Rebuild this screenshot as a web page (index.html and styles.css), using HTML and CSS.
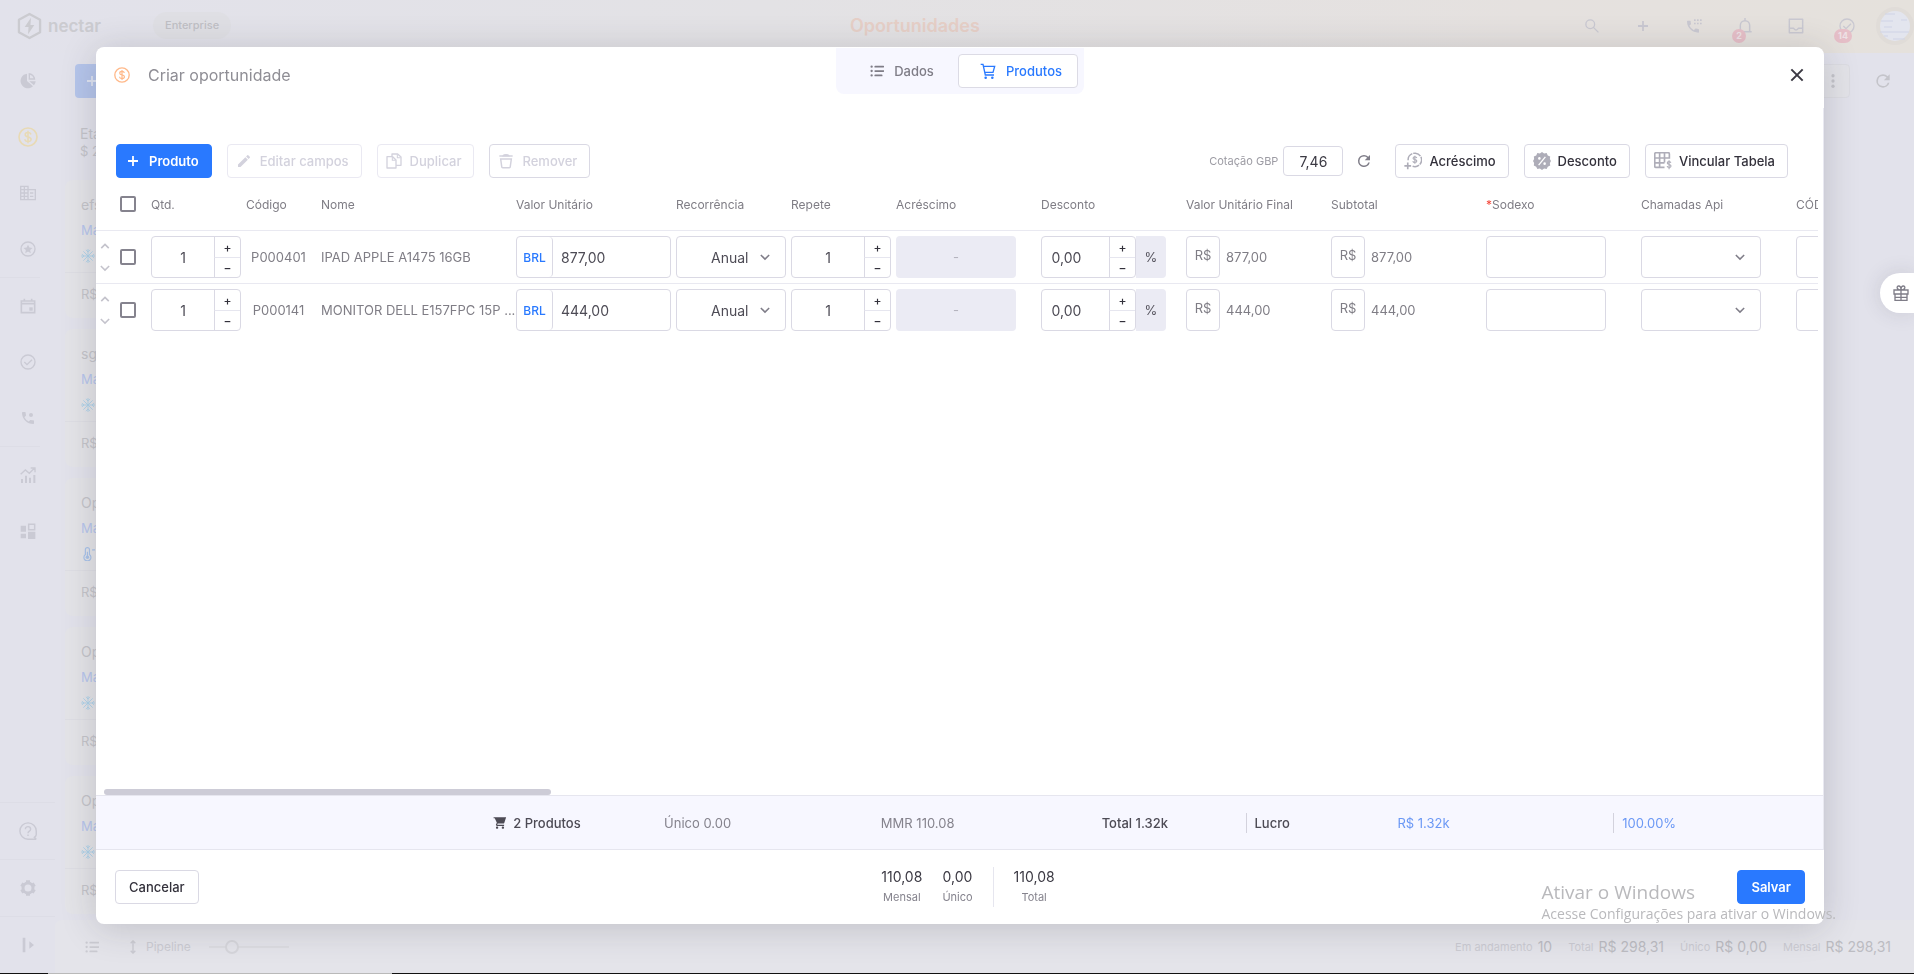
FILE: index.html
```html
<!DOCTYPE html>
<html lang="pt-BR">
<head>
    <meta charset="UTF-8">
    <meta name="viewport" content="width=device-width, initial-scale=1.0">
    <title>Oportunidades</title>
    <link rel="stylesheet" href="styles.css">
</head>
<body>
    <svg class="sprite" aria-hidden="true">
        <symbol id="i-plus" viewBox="0 0 24 24"><path d="M12 2v20M2 12h20" fill="none" stroke="currentColor" stroke-width="3.6"/></symbol>
        <symbol id="i-money" viewBox="0 0 24 24"><circle cx="12" cy="12" r="10.8" fill="none" stroke="currentColor" stroke-width="2"/><path d="M15.5 9c-.3-1.5-1.600-2.300-3.500-2.300-2 0-3.400 1-3.400 2.500 0 3.600 7.100 1.800 7.100 5.500 0 1.600-1.500 2.700-3.700 2.700-2.100 0-3.600-1-3.800-2.700M12 4.500v15" fill="none" stroke="currentColor" stroke-width="1.800"/></symbol>
        <symbol id="i-list" viewBox="0 0 24 24"><path d="M9 4.500h14M9 12h14M9 19.500h11" stroke="currentColor" stroke-width="3" stroke-linecap="round"/><circle cx="2.800" cy="4.500" r="2" fill="currentColor"/><circle cx="2.800" cy="12" r="2" fill="currentColor"/><circle cx="2.800" cy="19.500" r="2" fill="currentColor"/></symbol>
        <symbol id="i-cart" viewBox="0 0 24 24"><path d="M1 2h3.500l3.500 16h13M5.500 5h16.500l-2.500 9H7.500" fill="none" stroke="currentColor" stroke-width="2"/><circle cx="8.500" cy="22" r="1.900" fill="currentColor"/><circle cx="18.500" cy="22" r="1.900" fill="currentColor"/></symbol>
        <symbol id="i-cart-full" viewBox="0 0 24 24"><path d="M7 18c-1.100 0-1.990.9-1.990 2S5.900 22 7 22s2-.9 2-2-.9-2-2-2zM1 2v2h2l3.600 7.590-1.350 2.450c-.16.28-.25.61-.25.960 0 1.100.9 2 2 2h12v-2H7.420c-.14 0-.25-.11-.25-.25l.03-.12.9-1.630h9.450c.75 0 1.410-.41 1.750-1.030L22.500 2H5zm16 16c-1.100 0-1.990.9-1.990 2s.89 2 1.990 2 2-.9 2-2-.9-2-2-2z" fill="currentColor"/></symbol>
        <symbol id="i-close" viewBox="0 0 24 24"><path d="M3.500 3.500l17 17M20.500 3.500l-17 17" stroke="currentColor" stroke-width="3"/></symbol>
        <symbol id="i-pencil" viewBox="0 0 24 24"><path d="M3 17.250V21h3.750L17.810 9.940l-3.750-3.750L3 17.250zM20.710 7.040a1 1 0 0 0 0-1.410l-2.340-2.340a1 1 0 0 0-1.410 0l-1.830 1.830 3.750 3.750 1.830-1.830z" fill="currentColor"/></symbol>
        <symbol id="i-copy" viewBox="0 0 24 24"><path d="M9 5V1.500h8.500L22.500 6v12.500H16M9 5.500H1.500v17H15v-12l-5-5z" fill="none" stroke="currentColor" stroke-width="2" stroke-linejoin="round"/><path d="M17 2v5h5M9.500 6v5h5" fill="none" stroke="currentColor" stroke-width="1.600"/></symbol>
        <symbol id="i-trash" viewBox="0 0 24 24"><path d="M2 4.500h20" stroke="currentColor" stroke-width="2.200"/><path d="M8 4c1-2 7-2 8 0zM4 9h16l-1.600 11.500a1.500 1.500 0 0 1-1.500 1.500H7.100a1.500 1.500 0 0 1-1.500-1.500z" fill="none" stroke="currentColor" stroke-width="2.200"/></symbol>
        <symbol id="i-refresh" viewBox="0 0 24 24"><path d="M17.650 6.350A7.950 7.950 0 0 0 12 4a8 8 0 1 0 7.730 10h-2.080A6 6 0 1 1 12 6c1.660 0 3.140.69 4.220 1.780L13 11h7V4l-2.350 2.350z" fill="currentColor"/></symbol>
        <symbol id="i-add-money" viewBox="0 0 24 24"><path d="M5.500 11a9 9 0 1 1 6 8" fill="none" stroke="currentColor" stroke-width="2" stroke-dasharray="11 1.200"/><path d="M17 8c-.3-1-1.200-1.600-2.500-1.600-1.500 0-2.400.7-2.400 1.800 0 2.500 5 1.300 5 3.900 0 1.200-1 1.900-2.600 1.900-1.500 0-2.500-.7-2.700-1.900M14.500 4.900v10.600" fill="none" stroke="currentColor" stroke-width="1.500"/><path d="M5 14v9M.5 18.500h9" stroke="currentColor" stroke-width="2.200"/></symbol>
        <symbol id="i-percent" viewBox="0 0 24 24"><path d="M12 0l2.800 2 3.400-.6 1.500 3.100 3.200 1.400-.4 3.500L24 12l-1.500 2.600.4 3.500-3.200 1.400-1.500 3.100-3.400-.6L12 24l-2.800-2-3.400.6-1.500-3.100-3.200-1.400.4-3.500L0 12l1.500-2.600-.4-3.500 3.200-1.400 1.500-3.100 3.400.6z" fill="currentColor"/><path d="M16.500 6.500l-9 11" stroke="#fff" stroke-width="1.800"/><circle cx="8.500" cy="8.500" r="1.700" fill="#fff"/><circle cx="15.500" cy="15.500" r="1.700" fill="#fff"/></symbol>
        <symbol id="i-table" viewBox="0 0 24 24"><path d="M14 20.500H2.500a1.500 1.500 0 0 1-1.500-1.500V2.500A1.500 1.500 0 0 1 2.500 1H19a1.500 1.500 0 0 1 1.500 1.500V8H1M1 14.500h13M7.500 1v19.500M14 1v13" fill="none" stroke="currentColor" stroke-width="2.200"/><path d="M22.500 14.300c-.3-1-1.200-1.500-2.400-1.500-1.500 0-2.400.7-2.400 1.900 0 2.600 5 1.300 5 3.900 0 1.200-1 2-2.500 2s-2.500-.7-2.700-1.900M20.100 11v12" fill="none" stroke="currentColor" stroke-width="1.500"/></symbol>
        <symbol id="i-up" viewBox="0 0 24 24"><path d="M3 17l9-9 9 9" fill="none" stroke="currentColor" stroke-width="4"/></symbol>
        <symbol id="i-down" viewBox="0 0 24 24"><path d="M2 7l10 10L22 7" fill="none" stroke="currentColor" stroke-width="3.600"/></symbol>
        <symbol id="i-pie" viewBox="0 0 24 24"><path d="M10.500 1a11 11 0 1 0 9 18.800L10.500 12zM13 0v10h10A10.500 10.500 0 0 0 13 0zm2 2.500A8 8 0 0 1 20.500 8H15zM14 12.500h9.500a10 10 0 0 1-2.500 6z" fill="currentColor" fill-rule="evenodd"/></symbol>
        <symbol id="i-building" viewBox="0 0 24 24"><path d="M1 2h11v20H1zM12 7h11v15H12M1 7h11M1 12h11M1 17h11M6.500 2v20M15 12h5M15 17h5" fill="none" stroke="currentColor" stroke-width="2"/></symbol>
        <symbol id="i-star" viewBox="0 0 24 24"><circle cx="12" cy="12" r="10.500" fill="none" stroke="currentColor" stroke-width="2"/><path d="M12 5.500l2 4.400 4.800.5-3.600 3.200 1 4.700-4.200-2.400-4.200 2.400 1-4.700-3.600-3.200 4.800-.5z" fill="currentColor"/></symbol>
        <symbol id="i-calendar" viewBox="0 0 24 24"><path d="M2 4.500h20V22H2zM2 8.500h20M6.500 1v4M17.500 1v4" fill="none" stroke="currentColor" stroke-width="2.400"/><path d="M14 14h5v5h-5z" fill="currentColor"/></symbol>
        <symbol id="i-check" viewBox="0 0 24 24"><circle cx="12" cy="12" r="10.500" fill="none" stroke="currentColor" stroke-width="2"/><path d="M6.500 12l4 4 7.500-7.500" fill="none" stroke="currentColor" stroke-width="2"/></symbol>
        <symbol id="i-phone" viewBox="0 0 24 24"><path d="M20 15.500c-1.200 0-2.400-.2-3.600-.6-.3-.1-.7 0-1 .2l-2.200 2.200a15.100 15.100 0 0 1-6.600-6.600l2.200-2.200c.3-.3.4-.7.200-1C8.700 6.400 8.500 5.200 8.500 4c0-.5-.4-1-1-1H4c-.5 0-1 .5-1 1a17 17 0 0 0 17 17c.5 0 1-.5 1-1v-3.500c0-.5-.5-1-1-1z" fill="currentColor"/><circle cx="16.500" cy="7.500" r="3" fill="currentColor"/></symbol>
        <symbol id="i-dialpad" viewBox="0 0 24 24"><path d="M18.500 16.500c-1.200 0-2.400-.2-3.600-.6-.3-.1-.7 0-1 .2l-2.200 2.200a15.100 15.100 0 0 1-6.600-6.600l2.200-2.200c.3-.3.4-.7.200-1C7.200 7.400 7 6.200 7 5c0-.5-.4-1-1-1H2.500c-.5 0-1 .5-1 1a17 17 0 0 0 17 17c.5 0 1-.5 1-1v-3.500c0-.5-.5-1-1-1z" fill="currentColor"/><path d="M12 2h2.500v2.500H12zm4.500 0H19v2.500h-2.500zm4.500 0h2.500v2.500H21zm-9 5h2.500v2.500H12zm4.500 0H19v2.500h-2.500zm4.500 0h2.500v2.500H21z" fill="currentColor"/></symbol>
        <symbol id="i-chart" viewBox="0 0 24 24"><path d="M1 11l7-6.500 6 5L21.500 2M16 1.500h6.500V8" fill="none" stroke="currentColor" stroke-width="2"/><path d="M3 18v6M9 13v11M15 16v8M21.500 12v12" stroke="currentColor" stroke-width="3"/></symbol>
        <symbol id="i-dashboard" viewBox="0 0 24 24"><path d="M1 4h8v9H1zM1 16h8v7H1zM12 13h11v11H12z" fill="currentColor"/><path d="M13 2h9v8h-9z" fill="none" stroke="currentColor" stroke-width="2.200"/></symbol>
        <symbol id="i-help" viewBox="0 0 24 24"><path d="M23 23h-11A10.900 10.900 0 1 1 23 12v5q-.5 2-2.500 3.500L23 23" fill="none" stroke="currentColor" stroke-width="1.900"/><path d="M8.500 9.500c0-4.500 7-4.300 7 0 0 2.700-3.500 2.500-3.500 5.500M12 16.500v2" fill="none" stroke="currentColor" stroke-width="1.900"/></symbol>
        <symbol id="i-gear" viewBox="0 0 24 24"><circle cx="12" cy="12" r="7.500" fill="none" stroke="currentColor" stroke-width="4.500"/><path d="M12 .2v4M12 19.800v4M2 6.200l3.500 2M18.500 15.800l3.500 2M2 17.800l3.500-2M18.500 8.200l3.500-2" stroke="currentColor" stroke-width="6"/></symbol>
        <symbol id="i-expand" viewBox="0 0 24 24"><path d="M4 1h4v22H4zM14 6.500l7 5.500-7 5.500z" fill="currentColor"/></symbol>
        <symbol id="i-height" viewBox="0 0 24 24"><path d="M12 2v20M8 5.500L12 1.500l4 4M8 18.500l4 4 4-4" fill="none" stroke="currentColor" stroke-width="2.400"/></symbol>
        <symbol id="i-search" viewBox="0 0 24 24"><circle cx="9" cy="9" r="7.500" fill="none" stroke="currentColor" stroke-width="2.200"/><path d="M14 14l9 9" stroke="currentColor" stroke-width="2.200"/></symbol>
        <symbol id="i-bell" viewBox="0 0 24 24"><path d="M5 20V11a7 7 0 0 1 14 0v9M2 20.500h20M12 0v4" fill="none" stroke="currentColor" stroke-width="2.200"/></symbol>
        <symbol id="i-inbox" viewBox="0 0 24 24"><path d="M2 2h20v20H2zM2 15.500h6.500q1 2.500 3.500 2.500t3.500-2.500H22" fill="none" stroke="currentColor" stroke-width="2.200" stroke-linejoin="round"/></symbol>
        <symbol id="i-snow" viewBox="0 0 24 24"><path d="M12 0v24M0 12h24M4 4l16 16M20 4L4 20M8.500 1.500L12 5l3.500-3.500M8.500 22.500L12 19l3.500 3.500M1.500 8.500L5 12l-3.500 3.500M22.500 8.500L19 12l3.500 3.500" fill="none" stroke="currentColor" stroke-width="1.400"/></symbol>
        <symbol id="i-temp" viewBox="0 0 24 24"><path d="M7.500 13V4.500a3.500 3.500 0 0 1 7 0V13a6 6 0 1 1-7 0z" fill="none" stroke="currentColor" stroke-width="2"/><circle cx="11" cy="17.500" r="3" fill="currentColor"/><path d="M11 8v9M19 5h5" stroke="currentColor" stroke-width="2"/></symbol>
        <symbol id="i-gift" viewBox="0 0 24 24"><path d="M1.500 7.500h21v6h-21zM3 13.500h18V23H3zM12 7.500V23M12 7.500C5 7.500 5 1.500 8.500 1.500S12 7.500 12 7.500s0-6 3.500-6 3.500 6-3.500 6M3 18.500h18" fill="none" stroke="currentColor" stroke-width="2"/></symbol>
        <symbol id="i-dots" viewBox="0 0 24 24"><circle cx="12" cy="3" r="2.800" fill="currentColor"/><circle cx="12" cy="12" r="2.800" fill="currentColor"/><circle cx="12" cy="21" r="2.800" fill="currentColor"/></symbol>
        <symbol id="i-logo" viewBox="0 0 26 28"><path d="M13 1.500l11 6v13l-11 6-11-6v-13z" fill="none" stroke="currentColor" stroke-width="2.400" stroke-linejoin="round"/><path d="M14.500 5.500L8 15h4l-.5 7.500L18 13h-4z" fill="currentColor"/></symbol>
    </svg>

    <!-- pagina -->
    <div class="page">
        <header class="topbar">
            <a class="logo" href="#"><svg><use href="#i-logo"/></svg>nectar</a>
            <span class="plan">Enterprise</span>
            <h1>Oportunidades</h1>
            <div class="top-actions">
                <button aria-label="Buscar"><svg class="i14"><use href="#i-search"/></svg></button>
                <button aria-label="Adicionar"><svg class="i12"><use href="#i-plus"/></svg></button>
                <button aria-label="Telefone"><svg class="i16"><use href="#i-dialpad"/></svg></button>
                <button aria-label="Notificações"><svg class="i16"><use href="#i-bell"/></svg><span class="badge">2</span></button>
                <button aria-label="Mensagens"><svg class="i16"><use href="#i-inbox"/></svg></button>
                <button aria-label="Tarefas"><svg class="i16"><use href="#i-check"/></svg><span class="badge">14</span></button>
            </div>
            <span class="avatar"><svg viewBox="0 0 30 30"><path d="M5 3h10M1 10h12M21 9h6M4 16h8M0 21h29M4 25h4M13 28h12" stroke="#cfd3e6" stroke-width="1.200"/></svg></span>
        </header>

        <div class="body">
            <nav class="sidebar">
                <div class="nav-group">
                    <a href="#" aria-label="Painel"><svg class="i16"><use href="#i-pie"/></svg></a>
                    <a href="#" aria-label="Oportunidades" class="active"><svg class="i20"><use href="#i-money"/></svg></a>
                    <a href="#" aria-label="Empresas"><svg class="i16"><use href="#i-building"/></svg></a>
                    <a href="#" aria-label="Favoritos"><svg class="i16"><use href="#i-star"/></svg></a>
                </div>
                <div class="nav-group">
                    <a href="#" aria-label="Agenda"><svg class="i16"><use href="#i-calendar"/></svg></a>
                    <a href="#" aria-label="Tarefas"><svg class="i16"><use href="#i-check"/></svg></a>
                    <a href="#" aria-label="Ligações"><svg class="i16"><use href="#i-phone"/></svg></a>
                </div>
                <div class="nav-group last">
                    <a href="#" aria-label="Relatórios"><svg class="i16"><use href="#i-chart"/></svg></a>
                    <a href="#" aria-label="Módulos"><svg class="i16"><use href="#i-dashboard"/></svg></a>
                </div>
                <a class="nav-foot" href="#" aria-label="Ajuda"><svg class="i18"><use href="#i-help"/></svg></a>
                <a class="nav-foot" href="#" aria-label="Configurações"><svg class="i16"><use href="#i-gear"/></svg></a>
                <a class="nav-foot" href="#" aria-label="Expandir"><svg class="i16"><use href="#i-expand"/></svg></a>
            </nav>

            <main class="board">
                <div class="board-bar">
                    <button class="new" aria-label="Nova oportunidade"><svg class="i12"><use href="#i-plus"/></svg></button>
                    <button class="more" aria-label="Mais"><svg class="i14"><use href="#i-dots"/></svg></button>
                    <button class="reload" aria-label="Atualizar"><svg class="i20"><use href="#i-refresh"/></svg></button>
                </div>
                <section class="stage">
                    <div class="stage-head">Etapa 1<small>$ 298,31</small></div>
                    <article class="card"><p>efs</p><a href="#">Marcos</a><svg class="i14"><use href="#i-snow"/></svg><footer>R$ 0,00</footer></article>
                    <article class="card"><p>sg</p><a href="#">Marcos</a><svg class="i14"><use href="#i-snow"/></svg><footer>R$ 0,00</footer></article>
                    <article class="card"><p>Oportunidade</p><a href="#">Marcos</a><svg class="i14 temp"><use href="#i-temp"/></svg><footer>R$ 0,00</footer></article>
                    <article class="card"><p>Oportunidade</p><a href="#">Marcos</a><svg class="i14"><use href="#i-snow"/></svg><footer>R$ 0,00</footer></article>
                    <article class="card"><p>Oportunidade</p><a href="#">Marcos</a><svg class="i14"><use href="#i-snow"/></svg><footer>R$ 0,00</footer></article>
                </section>
                <div class="statusbar">
                    <svg class="i14"><use href="#i-list"/></svg>
                    <svg class="i14 height"><use href="#i-height"/></svg>
                    <label for="zoom">Pipeline</label>
                    <input id="zoom" type="range" min="0" max="100" value="25">
                    <dl>
                        <dt>Em andamento</dt><dd>10</dd>
                        <dt>Total</dt><dd>R$ 298,31</dd>
                        <dt>Único</dt><dd>R$ 0,00</dd>
                        <dt>Mensal</dt><dd>R$ 298,31</dd>
                    </dl>
                </div>
            </main>
        </div>
        <div class="taskbar"><span></span></div>
    </div>

    <button class="gift" aria-label="Novidades"><svg class="i16"><use href="#i-gift"/></svg></button>

    <!-- modal -->
    <div class="overlay">
        <div class="modal" role="dialog" aria-labelledby="modal-title">
            <div class="modal-head">
                <h2 id="modal-title"><svg class="i16"><use href="#i-money"/></svg>Criar oportunidade</h2>
                <div class="tabs">
                    <button class="tab"><svg class="i14"><use href="#i-list"/></svg>Dados</button>
                    <button class="tab selected"><svg class="i16"><use href="#i-cart"/></svg>Produtos</button>
                </div>
                <button class="close" aria-label="Fechar"><svg class="i16"><use href="#i-close"/></svg></button>
            </div>

            <div class="modal-body">
                <div class="toolbar">
                    <button class="btn primary"><svg class="i12"><use href="#i-plus"/></svg>Produto</button>
                    <button class="btn off" disabled><svg class="i16"><use href="#i-pencil"/></svg>Editar campos</button>
                    <button class="btn off" disabled><svg class="i16"><use href="#i-copy"/></svg>Duplicar</button>
                    <button class="btn off remove" disabled><svg class="i16"><use href="#i-trash"/></svg>Remover</button>
                    <div class="quote">
                        <label for="gbp">Cotação GBP</label>
                        <input id="gbp" type="text" value="7,46">
                        <button aria-label="Atualizar cotação"><svg class="i18"><use href="#i-refresh"/></svg></button>
                    </div>
                    <button class="btn tool"><svg class="i18"><use href="#i-add-money"/></svg>Acréscimo</button>
                    <button class="btn tool"><svg class="i18"><use href="#i-percent"/></svg>Desconto</button>
                    <button class="btn tool"><svg class="i18"><use href="#i-table"/></svg>Vincular Tabela</button>
                </div>

                <div class="scroller">
                    <table>
                        <colgroup>
                            <col class="c-move"><col class="c-check"><col class="c-qty"><col class="c-code"><col class="c-name">
                            <col class="c-unit"><col class="c-rec"><col class="c-rep"><col class="c-add"><col class="c-add">
                            <col class="c-add"><col class="c-wide"><col class="c-wide"><col class="c-wide"><col class="c-wide">
                        </colgroup>
                        <thead>
                            <tr>
                                <th></th>
                                <th><input type="checkbox" aria-label="Selecionar todos"></th>
                                <th>Qtd.</th>
                                <th>Código</th>
                                <th>Nome</th>
                                <th>Valor Unitário</th>
                                <th>Recorrência</th>
                                <th>Repete</th>
                                <th>Acréscimo</th>
                                <th>Desconto</th>
                                <th>Valor Unitário Final</th>
                                <th>Subtotal</th>
                                <th><span class="req">*</span>Sodexo</th>
                                <th>Chamadas Api</th>
                                <th>CÓDIGO</th>
                            </tr>
                        </thead>
                        <tbody>
                            <tr>
                                <td><div class="move"><button aria-label="Subir"><svg><use href="#i-up"/></svg></button><button aria-label="Descer"><svg><use href="#i-down"/></svg></button></div></td>
                                <td><input type="checkbox" aria-label="Selecionar IPAD APPLE A1475 16GB"></td>
                                <td><div class="field stepper w90"><input type="text" value="1" aria-label="Qtd."><button>+</button><button>−</button></div></td>
                                <td class="code">P000401</td>
                                <td class="name">IPAD APPLE A1475 16GB</td>
                                <td><div class="field money"><button>BRL</button><input type="text" value="877,00" aria-label="Valor Unitário"></div></td>
                                <td><div class="field pick w110"><select aria-label="Recorrência"><option>Anual</option></select><svg><use href="#i-down"/></svg></div></td>
                                <td><div class="field stepper w100"><input type="text" value="1" aria-label="Repete"><button>+</button><button>−</button></div></td>
                                <td><input class="locked" type="text" value="-" disabled aria-label="Acréscimo"></td>
                                <td><div class="discount"><div class="field stepper w95"><input type="text" value="0,00" aria-label="Desconto"><button>+</button><button>−</button></div><button class="unit">%</button></div></td>
                                <td><div class="total"><span>R$</span>877,00</div></td>
                                <td><div class="total"><span>R$</span>877,00</div></td>
                                <td><div class="field w120"><input type="text" aria-label="Sodexo"></div></td>
                                <td><div class="field pick w120"><select aria-label="Chamadas Api"><option></option></select><svg><use href="#i-down"/></svg></div></td>
                                <td><div class="field w120"><input type="text" aria-label="CÓDIGO"></div></td>
                            </tr>
                            <tr>
                                <td><div class="move"><button aria-label="Subir"><svg><use href="#i-up"/></svg></button><button aria-label="Descer"><svg><use href="#i-down"/></svg></button></div></td>
                                <td><input type="checkbox" aria-label="Selecionar MONITOR DELL"></td>
                                <td><div class="field stepper w90"><input type="text" value="1" aria-label="Qtd."><button>+</button><button>−</button></div></td>
                                <td class="code">P000141</td>
                                <td class="name">MONITOR DELL E157FPC 15P ...</td>
                                <td><div class="field money"><button>BRL</button><input type="text" value="444,00" aria-label="Valor Unitário"></div></td>
                                <td><div class="field pick w110"><select aria-label="Recorrência"><option>Anual</option></select><svg><use href="#i-down"/></svg></div></td>
                                <td><div class="field stepper w100"><input type="text" value="1" aria-label="Repete"><button>+</button><button>−</button></div></td>
                                <td><input class="locked" type="text" value="-" disabled aria-label="Acréscimo"></td>
                                <td><div class="discount"><div class="field stepper w95"><input type="text" value="0,00" aria-label="Desconto"><button>+</button><button>−</button></div><button class="unit">%</button></div></td>
                                <td><div class="total"><span>R$</span>444,00</div></td>
                                <td><div class="total"><span>R$</span>444,00</div></td>
                                <td><div class="field w120"><input type="text" aria-label="Sodexo"></div></td>
                                <td><div class="field pick w120"><select aria-label="Chamadas Api"><option></option></select><svg><use href="#i-down"/></svg></div></td>
                                <td><div class="field w120"><input type="text" aria-label="CÓDIGO"></div></td>
                            </tr>
                        </tbody>
                    </table>
                </div>
                <div class="scrollbar"><span></span></div>

                <div class="summary">
                    <span class="strong count"><svg class="i14"><use href="#i-cart-full"/></svg>2 Produtos</span>
                    <span>Único 0.00</span>
                    <span>MMR 110.08</span>
                    <span class="strong">Total 1.32k</span>
                    <span class="strong sep">Lucro</span>
                    <span class="profit">R$ 1.32k</span>
                    <span class="profit sep">100.00%</span>
                </div>
            </div>

            <div class="modal-foot">
                <button class="btn">Cancelar</button>
                <div class="sums">
                    <div>110,08<small>Mensal</small></div>
                    <div>0,00<small>Único</small></div>
                    <div class="all">110,08<small>Total</small></div>
                </div>
                <button class="btn primary">Salvar</button>
            </div>
        </div>
    </div>

    <div class="watermark">Ativar o Windows<small>Acesse Configurações para ativar o Windows.</small></div>
</body>
</html>
```

FILE: styles.css
```css
* {
    box-sizing: border-box;
}
body {
    margin: 0;
    font-family: Inter, sans-serif;
    font-size: 13px;
    color: #3b3943;
    background: #e2e2eb;
    overflow: hidden;
}
h1, h2, p, dl, dd {
    margin: 0;
}
button, input, select {
    font: inherit;
    color: inherit;
    background: none;
    border: 0;
    padding: 0;
    margin: 0;
    border-radius: 0;
    min-width: 0;
}
button {
    display: flex;
    align-items: center;
    justify-content: center;
    cursor: pointer;
}
a {
    color: inherit;
    text-decoration: none;
}
svg {
    display: block;
    flex: none;
}
.sprite {
    position: absolute;
    width: 0;
    height: 0;
}
.i12 { width: 12px; height: 12px; }
.i14 { width: 14px; height: 14px; }
.i16 { width: 16px; height: 16px; }
.i18 { width: 18px; height: 18px; }
.i20 { width: 20px; height: 20px; }

/* pagina de fundo */
.page {
    display: flex;
    flex-direction: column;
    height: 100vh;
    color: #c4c4ca;
}
.topbar {
    display: grid;
    grid-template-columns: 136px 7fr auto 9fr 38px;
    align-items: center;
    flex: none;
    height: 53px;
    padding: 0 0 2px 17px;
    background: linear-gradient(90deg, #e2e2eb, #e3e2e5 40%, #e5e1df 80%, #e5e1dc);
}
.logo {
    display: flex;
    align-items: center;
    gap: 6px;
    font-size: 17px;
    font-weight: 600;
    color: #cbcbd0;
}
.logo svg {
    width: 25px;
    height: 28px;
}
.plan {
    justify-self: start;
    padding: 6px 12px;
    border-radius: 14px;
    background: #dfdfe4;
    color: #bfbfc5;
    font-size: 11px;
    font-weight: 500;
    line-height: 15px;
}
.topbar h1 {
    font-size: 18px;
    font-weight: 600;
    line-height: 22px;
    color: #e6cfc7;
}
.top-actions {
    display: flex;
    justify-content: flex-end;
    gap: 16px;
    padding-right: 12px;
    color: #c9c8d1;
}
.top-actions button {
    position: relative;
    width: 35px;
    height: 30px;
}
.badge {
    position: absolute;
    left: 5px;
    top: 18px;
    min-width: 14px;
    padding: 0 4px;
    border-radius: 7px;
    background: #e6bfc8;
    color: #eee2e6;
    font-size: 9px;
    font-weight: 700;
    line-height: 14px;
}
.avatar {
    display: flex;
    align-items: center;
    justify-content: center;
    width: 38px;
    height: 38px;
    border: 4px solid #e0dcd8;
    border-radius: 50%;
    background: #e3e5ee;
}
.body {
    display: flex;
    flex: 1;
    min-height: 0;
}
.sidebar {
    display: flex;
    flex-direction: column;
    width: 55px;
    color: #cacad4;
}
.sidebar a {
    display: flex;
    align-items: center;
    justify-content: center;
    height: 56px;
}
.sidebar .active {
    color: #e8dab5;
}
.nav-group {
    width: 40px;
    border-bottom: 1px solid #dddde6;
}
.nav-group a {
    width: 55px;
}
.nav-group.last {
    border: 0;
    margin-bottom: auto;
}
.sidebar .nav-foot {
    height: 57px;
    border-top: 1px solid #dddde6;
}
.board {
    display: flex;
    flex-direction: column;
    flex: 1;
    min-width: 0;
}
.board-bar {
    display: flex;
    align-items: center;
    margin: 11px 21px 0 20px;
}
.board-bar .new {
    width: 34px;
    height: 34px;
    margin-right: auto;
    border-radius: 4px;
    background: #b5c5eb;
    color: #dfe4f2;
}
.board-bar .more {
    width: 34px;
    height: 34px;
    margin-right: 23px;
    border: 1px solid #dcdce2;
    border-radius: 4px;
    background: #e3e3e8;
}
.stage {
    display: flex;
    flex-direction: column;
    flex: 1;
    gap: 11px;
    width: 250px;
    padding: 27px 0 0 10px;
}
.stage-head {
    height: 44px;
    padding-left: 15px;
    font-size: 14px;
    line-height: 18px;
}
.stage-head small {
    display: block;
    font-size: 13px;
    line-height: 16px;
}
.card {
    height: 138px;
    padding-top: 14px;
    border-radius: 8px;
    background: #e4e4e8;
}
.card p, .card > a, .card > svg, .card footer {
    display: block;
    margin-left: 16px;
}
.card p {
    font-size: 14px;
    line-height: 22px;
}
.card > a {
    color: #b7c6ed;
    line-height: 28px;
}
.card > svg {
    margin-top: 5px;
    color: #a9d0ea;
}
.card .temp {
    color: #a9c3ea;
}
.card footer {
    margin: 9px 0 0;
    padding-left: 16px;
    border-top: 1px solid #dedee4;
    line-height: 42px;
}
.statusbar {
    display: flex;
    align-items: center;
    height: 53px;
    padding: 0 23px 0 30px;
    border-radius: 6px 0 0 0;
    background: #e4e4ea;
    color: #cbcbd2;
    font-size: 12px;
}
.statusbar .height {
    margin: 0 6px 0 27px;
}
.statusbar input {
    appearance: none;
    width: 80px;
    height: 2px;
    margin-left: 18px;
    background: #dcdce1;
}
.statusbar input::-webkit-slider-thumb {
    appearance: none;
    width: 14px;
    height: 14px;
    border: 2px solid #d6d6db;
    border-radius: 50%;
    background: #e4e4ea;
}
.statusbar dl {
    display: flex;
    align-items: center;
    margin-left: auto;
    font-size: 11px;
}
.statusbar dd {
    margin: 0 16px 0 5px;
    font-size: 14px;
    color: #bcbcc2;
}
.statusbar dd:last-child {
    margin-right: 0;
}
.taskbar {
    flex: none;
    height: 1px;
    background: #111;
}
.taskbar span {
    display: block;
    width: 344px;
    height: 1px;
    margin-left: 48px;
    background: #b9b9b9;
}
.gift {
    position: fixed;
    right: 0;
    top: 273px;
    width: 34px;
    height: 40px;
    padding-left: 8px;
    border-radius: 20px 0 0 20px;
    background: #fff;
    color: #7f7d88;
    box-shadow: 0 0 20px rgba(60, 60, 80, .15);
}

/* modal */
.overlay {
    position: fixed;
    inset: 0;
    display: flex;
    padding: 47px 90px 50px 96px;
    pointer-events: none;
}
.modal {
    display: flex;
    flex-direction: column;
    flex: 1;
    min-width: 0;
    border-radius: 8px;
    background: #fff;
    box-shadow: 0 4px 36px rgba(50, 50, 60, .2);
    pointer-events: auto;
}
.modal-head {
    display: grid;
    grid-template-columns: 1fr auto 1fr;
    align-items: start;
    height: 61px;
}
.modal-head h2 {
    display: flex;
    align-items: center;
    gap: 18px;
    height: 56px;
    padding-left: 18px;
    font-size: 16px;
    font-weight: 400;
    color: #8f8e95;
}
.modal-head h2 svg {
    color: #ffb98a;
}
.close {
    justify-self: end;
    width: 54px;
    height: 56px;
}
.tabs {
    display: flex;
    gap: 2px;
    margin-top: 1px;
    padding: 6px;
    border-radius: 0 0 8px 8px;
    background: #f7f7ff;
}
.tab {
    gap: 10px;
    width: 114px;
    height: 34px;
    padding-left: 6px;
    border-radius: 4px;
    font-weight: 500;
    color: #7f7d87;
}
.tab.selected {
    width: 120px;
    border: 1px solid #dcdbe5;
    background: #fff;
    color: #2979ff;
}
.modal-body {
    display: flex;
    flex-direction: column;
    flex: 1;
    min-height: 0;
    padding-top: 36px;
    border-right: 1px solid #e9e9f1;
}
.toolbar {
    display: flex;
    align-items: center;
    gap: 15px;
    padding: 0 35px 0 20px;
}
.btn {
    gap: 8px;
    height: 34px;
    padding: 0 12px 0 8px;
    border: 1px solid #dad9e4;
    border-radius: 4px;
    background: #fff;
    font-weight: 500;
    color: #33313b;
}
.btn svg {
    color: #aeadb8;
}
.btn.tool {
    gap: 7px;
}
.btn.primary {
    gap: 10px;
    padding-left: 10px;
    border-color: #2979ff;
    background: #2979ff;
    color: #fff;
    font-weight: 600;
}
.btn.primary svg {
    color: #fff;
}
.btn.off, .btn.off svg {
    color: #d3d2dd;
}
.btn.off {
    border-color: #eae9f2;
}
.btn.remove {
    border-color: #dad9e4;
}
.quote {
    display: flex;
    align-items: center;
    gap: 5px;
    margin-left: auto;
    font-size: 11px;
    color: #9c9ba3;
}
.quote input {
    width: 60px;
    height: 30px;
    border: 1px solid #dad9e4;
    border-radius: 4px;
    font-size: 14px;
    text-align: center;
    color: #3b3943;
}
.quote button {
    width: 32px;
    height: 30px;
    color: #7f7d88;
}

/* tabela */
.scroller {
    flex: 1;
    min-height: 0;
    margin-right: 5px;
    overflow: hidden;
}
table {
    width: 1855px;
    table-layout: fixed;
    border-spacing: 0;
}
.c-move { width: 24px; }
.c-check { width: 31px; }
.c-qty { width: 95px; }
.c-code { width: 75px; }
.c-name { width: 195px; }
.c-unit { width: 160px; }
.c-rec { width: 115px; }
.c-rep { width: 105px; }
.c-add { width: 145px; }
.c-wide { width: 155px; }
th, td {
    height: 53px;
    padding: 0;
    text-align: left;
    color: #7f7d85;
    border-bottom: 1px solid #e9e9f1;
}
tbody tr:last-child td {
    border-color: transparent;
}
th {
    font-size: 12px;
    font-weight: 400;
}
.req {
    color: #f44336;
}
.code {
    padding-right: 10px;
    text-align: center;
}
.name {
    white-space: nowrap;
}
input[type="checkbox"] {
    appearance: none;
    display: block;
    width: 16px;
    height: 16px;
    border: 2px solid #85838e;
    border-radius: 2px;
}
.move {
    display: flex;
    flex-direction: column;
    gap: 12px;
    width: 18px;
    align-items: center;
    color: #c4c3cc;
}
.move svg {
    width: 10px;
    height: 10px;
}
.field {
    display: grid;
    height: 42px;
    border: 1px solid #dad9e4;
    border-radius: 4px;
    background: #fff;
    color: #4d4b55;
    font-size: 14px;
}
.field input {
    width: 100%;
}
.w90 { width: 90px; }
.w95 { width: 95px; }
.w100 { width: 100px; }
.w110 { width: 110px; }
.w120 { width: 120px; }
.stepper {
    grid-template: 20px 20px / 1fr 26px;
}
.stepper input {
    grid-row: span 2;
    text-align: center;
}
.stepper button {
    border-left: 1px solid #dad9e4;
    font-size: 12px;
    font-weight: 500;
    color: #33313b;
}
.stepper button + button {
    border-top: 1px solid #e6e6ef;
}
.money {
    grid-template-columns: 36px 1fr;
    width: 155px;
}
.money button {
    border-right: 1px solid #dad9e4;
    border-radius: 4px;
    font-size: 12px;
    font-weight: 500;
    color: #2979ff;
}
.money input {
    padding-left: 8px;
}
.pick {
    align-items: center;
}
.pick select, .pick svg {
    grid-area: 1 / 1;
}
.pick select {
    appearance: none;
    width: 100%;
    height: 40px;
    padding-left: 34px;
}
.pick svg {
    justify-self: end;
    width: 10px;
    height: 10px;
    margin-right: 15px;
    color: #7f7d88;
    pointer-events: none;
}
.locked {
    display: block;
    width: 120px;
    height: 42px;
    border-radius: 4px;
    background: #ebebf4;
    color: #b5b4be;
    text-align: center;
}
.discount {
    display: flex;
}
.discount .stepper input {
    padding-right: 18px;
}
.unit {
    width: 30px;
    height: 42px;
    border-radius: 0 4px 4px 0;
    background: #ebebf4;
    color: #55535d;
}
.total {
    display: flex;
    align-items: center;
    gap: 6px;
}
.total span {
    width: 34px;
    height: 42px;
    border: 1px solid #dad9e4;
    border-radius: 4px;
    line-height: 36px;
    text-align: center;
}
.scrollbar {
    padding-left: 8px;
}
.scrollbar span {
    display: block;
    width: 26%;
    height: 6px;
    border-radius: 3px;
    background: #cdccd7;
}
.summary {
    display: grid;
    grid-template-columns: 171fr 217fr 221fr 144fr 152fr 216fr 210fr;
    align-items: center;
    height: 55px;
    padding-left: 23%;
    border-top: 1px solid #e6e6ef;
    border-bottom: 1px solid #e6e6ef;
    background: #f7f7ff;
    color: #85838d;
}
.strong {
    font-weight: 500;
    color: #4d4b55;
}
.count {
    display: flex;
    align-items: center;
    gap: 6px;
}
.profit {
    color: #6b98f5;
}
.sep {
    padding-left: 8px;
    border-left: 1px solid #d3d2dd;
    line-height: 20px;
}
.modal-foot {
    display: flex;
    align-items: center;
    justify-content: space-between;
    height: 74px;
    padding: 0 19px;
}
.modal-foot .btn {
    padding: 0 13px;
}
.sums {
    display: flex;
    gap: 20px;
    font-size: 14px;
    line-height: 20px;
    text-align: center;
}
.sums small {
    display: block;
    font-size: 11px;
    color: #85838d;
}
.sums .all {
    padding-left: 20px;
    border-left: 1px solid #e6e6ef;
}
.watermark {
    position: fixed;
    right: 78px;
    bottom: 50px;
    font-family: "Open Sans", sans-serif;
    font-size: 19px;
    line-height: 24px;
    color: #b9b9bc;
    pointer-events: none;
}
.watermark small {
    display: block;
    font-size: 14px;
    line-height: 20px;
}
```
